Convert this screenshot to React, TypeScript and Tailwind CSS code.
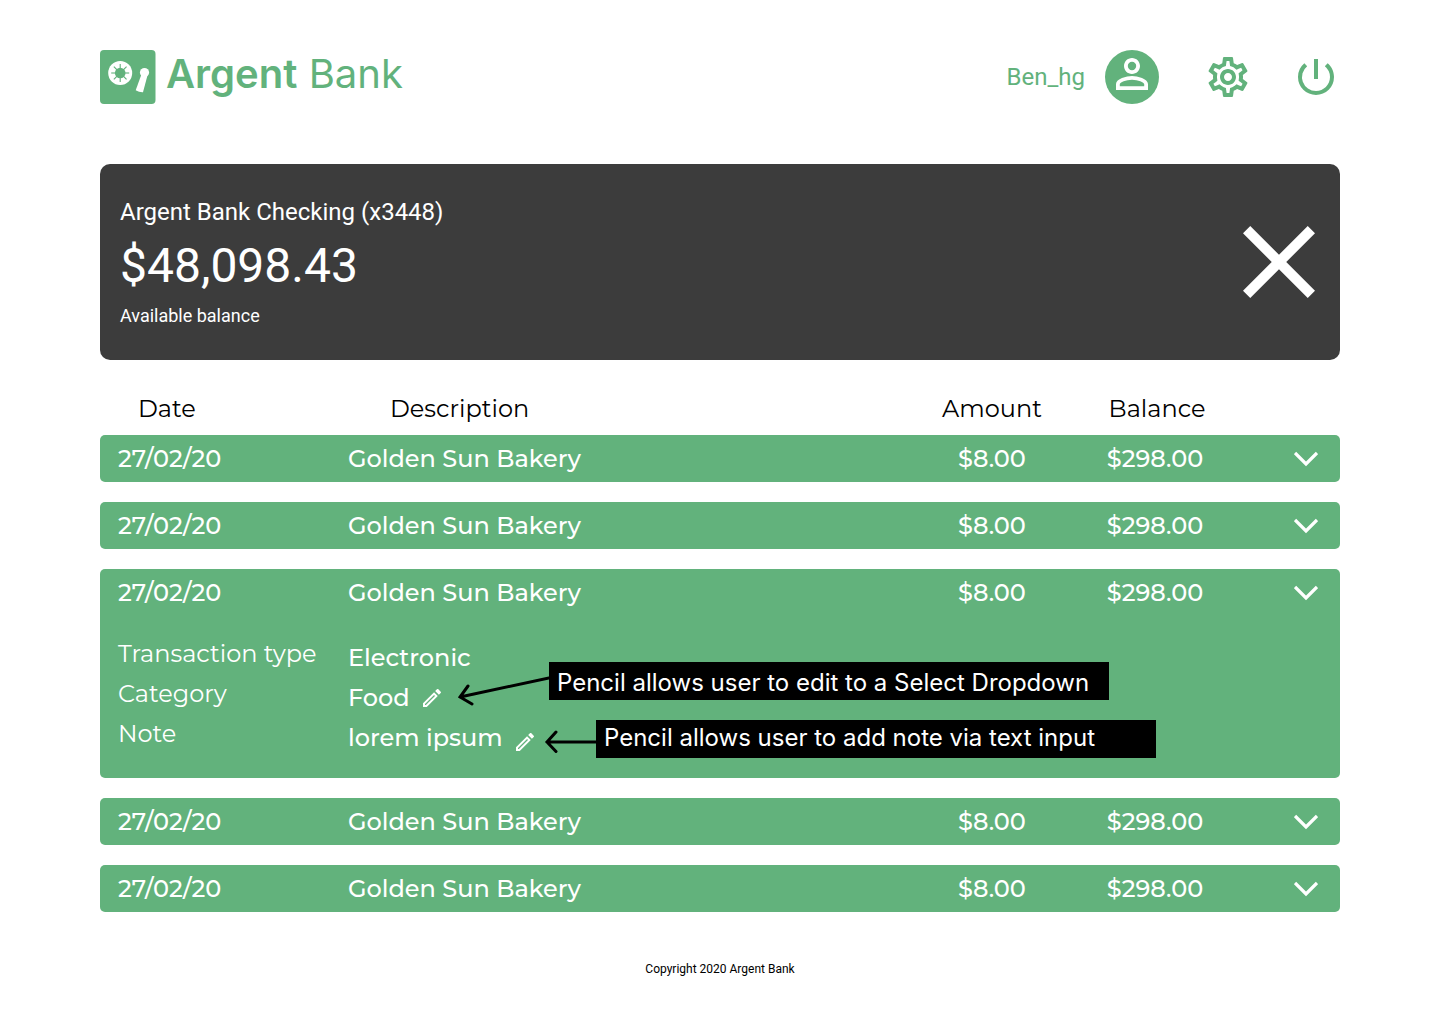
import { useState } from "react";
import { MdOutlineEdit, MdOutlinePersonOutline, MdOutlineSettings, MdPowerSettingsNew } from "react-icons/md";

type Transaction = {
  id: number;
  date: string;
  description: string;
  amount: string;
  balance: string;
};

const transactions: Transaction[] = [1, 2, 3, 4, 5].map((id) => ({
  id,
  date: "27/02/20",
  description: "Golden Sun Bakery",
  amount: "$8.00",
  balance: "$298.00",
}));

const columns = "grid grid-cols-[230px_1fr_164px_164px_84px] items-center px-[18px]";
const annotation = "h-[38px] w-[560px] bg-black px-2 font-['Inter',sans-serif] font-normal whitespace-nowrap text-white";

function LogoMark() {
  const spokes = [0, 45, 90, 135, 180, 225, 270, 315];
  return (
    <svg width="56" height="54" viewBox="0 0 56 54" aria-hidden="true">
      <rect width="55.5" height="54" rx="4" fill="#62b27c" />
      <circle cx="20.2" cy="23" r="12" fill="#fff" />
      <circle cx="20.2" cy="23" r="5.3" fill="#62b27c" />
      {spokes.map((angle) => (
        <path key={angle} d="M20.2 23V14" stroke="#62b27c" strokeWidth="1.1" transform={`rotate(${angle} 20.2 23)`} />
      ))}
      <circle cx="44.5" cy="22.5" r="4.6" fill="#fff" />
      <path d="M41.4 24.5l6 1.2-4.4 16.5c-2.600.1-5-.6-7.300-1.900z" fill="#fff" />
    </svg>
  );
}

function CloseIcon() {
  return (
    <svg width="72" height="72" viewBox="5 5 14 14" fill="currentColor" aria-hidden="true">
      <path d="M19 6.410 17.590 5 12 10.590 6.410 5 5 6.410 10.590 12 5 17.590 6.410 19 12 13.410 17.590 19 19 17.590 13.410 12z" />
    </svg>
  );
}

function Chevron() {
  return (
    <svg width="24" height="16" viewBox="0 0 24 16" fill="none" stroke="currentColor" strokeWidth="3.300" aria-hidden="true">
      <path d="M1 2 12 13 23 2" />
    </svg>
  );
}

function Details() {
  return (
    <tr className="relative block">
      <td className="block px-[18px] pt-[18px] pb-6">
        <dl className="grid auto-rows-[40px] grid-cols-[230px_1fr] items-center">
          <dt>Transaction type</dt>
          <dd className="pt-2 font-medium">Electronic</dd>
          <dt>Category</dt>
          <dd className="flex items-center gap-[10px] pt-2 font-medium">
            Food
            <button type="button" aria-label="Edit category">
              <MdOutlineEdit size={24} />
            </button>
          </dd>
          <dt>Note</dt>
          <dd className="flex items-center gap-[10px] pt-2 font-medium">
            lorem ipsum
            <button type="button" aria-label="Edit note" className="self-end">
              <MdOutlineEdit size={24} />
            </button>
          </dd>
        </dl>
        <div className="absolute top-[46px] left-[358px] flex items-start">
          <svg width="91" height="46" viewBox="0 0 91 46" fill="none" stroke="#000" strokeWidth="3" strokeLinecap="round" aria-hidden="true">
            <path d="M91 16 2 35M10 24 2 35 14 42" />
          </svg>
          <p className={`${annotation} leading-[42px]`}>Pencil allows user to edit to a Select Dropdown</p>
        </div>
        <div className="absolute top-[104px] left-[444px] flex items-start">
          <svg width="52" height="38" viewBox="0 0 52 38" fill="none" stroke="#000" strokeWidth="3" strokeLinecap="round" aria-hidden="true">
            <path d="M52 22H3M12 12 3 22l9 9.500" />
          </svg>
          <p className={`${annotation} leading-9`}>Pencil allows user to add note via text input</p>
        </div>
      </td>
    </tr>
  );
}

export default function App() {
  const [openId, setOpenId] = useState<number | null>(3);

  return (
    <div className="flex min-h-screen flex-col bg-white px-[100px] pt-[50px] font-['Roboto',sans-serif]">
      <header className="flex items-center justify-between text-[#62b27c]">
        <a href="#" className="flex items-center gap-[10px] font-['Inter',sans-serif] text-[40px] leading-[54px]">
          <LogoMark />
          <span className="-mt-1.5">
            <span className="font-semibold">Argent</span> <span>Bank</span>
          </span>
        </a>
        <nav className="flex items-center">
          <a href="#" className="flex items-center gap-5 text-2xl">
            Ben_hg
            <span className="flex size-[54px] justify-center rounded-full bg-[#62b27c] text-white">
              <MdOutlinePersonOutline size={48} />
            </span>
          </a>
          <button type="button" aria-label="Settings" className="ml-[45px]">
            <MdOutlineSettings size={48} />
          </button>
          <button type="button" aria-label="Sign out" className="ml-10">
            <MdPowerSettingsNew size={48} />
          </button>
        </nav>
      </header>

      <main className="mt-[60px]">
        <section className="flex items-center justify-between rounded-[10px] bg-[#3c3c3c] py-[30px] pr-[25px] pl-5 text-white">
          <div>
            <h1 className="text-2xl leading-9">Argent Bank Checking (x3448)</h1>
            <p className="mt-1.5 text-5xl leading-[60px]">$48,098.43</p>
            <p className="mt-1.5 text-lg">Available balance</p>
          </div>
          <button type="button" aria-label="Close account">
            <CloseIcon />
          </button>
        </section>

        <table className="mt-6 block font-['Montserrat','Inter',sans-serif] text-2xl">
          <thead className="block">
            <tr className={columns}>
              <th className="pt-[7px] pb-[9px] pl-5 text-left leading-[35px] font-normal">Date</th>
              <th className="pb-0.5 pl-[42px] text-left font-normal">Description</th>
              <th className="pb-0.5 font-normal">Amount</th>
              <th className="pb-0.5 pl-0.5 font-normal">Balance</th>
              <td />
            </tr>
          </thead>
          {transactions.map((t) => (
            <tbody key={t.id} className="mb-5 block rounded-[5px] bg-[#62b27c] text-white">
              <tr className={columns}>
                <td className="leading-[47px] font-medium">{t.date}</td>
                <td className="font-medium">{t.description}</td>
                <td className="text-center font-medium">{t.amount}</td>
                <td className="pr-0.5 text-center font-medium">{t.balance}</td>
                <td className="flex justify-end pr-1">
                  <button
                    type="button"
                    aria-label="Toggle details"
                    aria-expanded={openId === t.id}
                    onClick={() => setOpenId(openId === t.id ? null : t.id)}
                  >
                    <Chevron />
                  </button>
                </td>
              </tr>
              {openId === t.id && <Details />}
            </tbody>
          ))}
        </table>
      </main>

      <footer className="mt-7 text-center text-xs leading-[18px] text-black">Copyright 2020 Argent Bank</footer>
    </div>
  );
}
